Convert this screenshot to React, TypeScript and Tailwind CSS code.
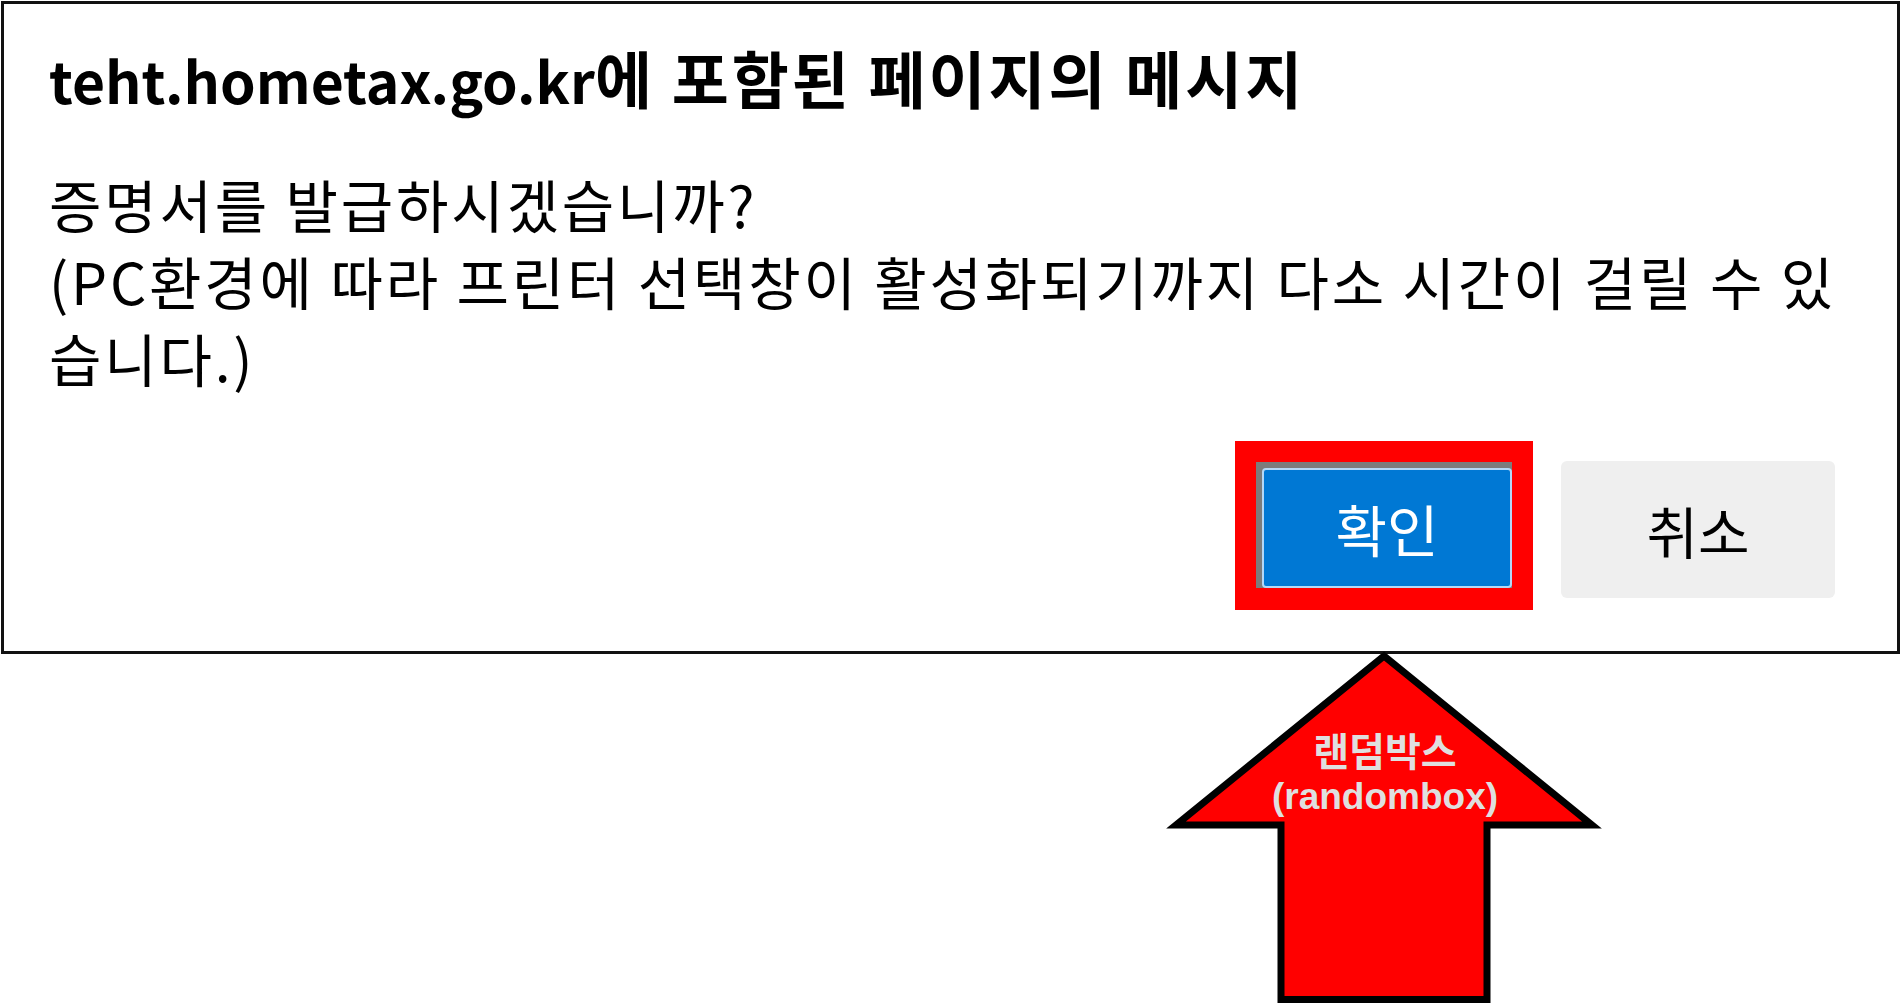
import React from 'react';

const KR = '"Noto Sans CJK KR", "Noto Sans", sans-serif';

function ConfirmButton() {
  // red annotation frame around the focused OK button
  return (
    <div className="bg-[#ff0000] w-[298px] h-[169px] pl-[21px] pt-[21px]">
      <div className="w-[256px] h-[126px] bg-[#7c7c7c] pl-[6px] pt-[6px]">
        <div className="w-full h-full bg-[#0078d4] border-[2px] border-[#b4d8f7] rounded-[4px] flex items-center justify-center">
          <span className="text-white text-[56px] leading-none">확인</span>
        </div>
      </div>
    </div>
  );
}

function CancelButton() {
  return (
    <div className="mt-[20px] ml-[28px] w-[274px] h-[137px] bg-[#efefef] rounded-[6px] flex items-center justify-center">
      <span className="text-black text-[56px] leading-none">취소</span>
    </div>
  );
}

function Arrow() {
  return (
    <div className="relative -mt-[9px] ml-[1160px] w-[450px] h-[359px]">
      <svg className="absolute inset-0" width="450" height="359" viewBox="1160 645 450 359">
        <polygon
          points="1384,656 1592,825 1487,825 1487,999.5 1281,999.5 1281,825 1176,825"
          fill="#ff0000"
          stroke="#000000"
          strokeWidth="7"
          strokeLinejoin="miter"
          strokeMiterlimit="10"
        />
      </svg>
      <div
        className="relative pt-[86px] flex flex-col items-center leading-[44px] font-bold text-[#dfdfdf]"
        style={{ fontFamily: '"Liberation Sans", "Noto Sans CJK KR", sans-serif' }}
      >
        <span className="text-[39px]">랜덤박스</span>
        <span className="text-[37px]">(randombox)</span>
      </div>
    </div>
  );
}

export default function App() {
  return (
    <div className="w-[1902px] h-[1004px] bg-white overflow-hidden" style={{ fontFamily: KR }}>
      <div className="ml-px mt-px w-[1899px] h-[653px] border-[3px] border-[#111111] pl-[45px] pt-[33px]">
        <h1 className="text-[57px] leading-[80px] font-bold text-black whitespace-nowrap">
          teht.hometax.go.kr
          <span className="text-[62px] tracking-[2.9px]">에 포함된 페이지의 메시지</span>
        </h1>
        <div className="mt-[46px] text-[57px] leading-[77px] tracking-[2.8px] text-black whitespace-nowrap">
          <p>증명서를 발급하시겠습니까?</p>
          <p>(PC환경에 따라 프린터 선택창이 활성화되기까지 다소 시간이 걸릴 수 있</p>
          <p>습니다.)</p>
        </div>
        <div className="mt-[45px] flex justify-end items-start pr-[62px]">
          <ConfirmButton />
          <CancelButton />
        </div>
      </div>
      <Arrow />
    </div>
  );
}
